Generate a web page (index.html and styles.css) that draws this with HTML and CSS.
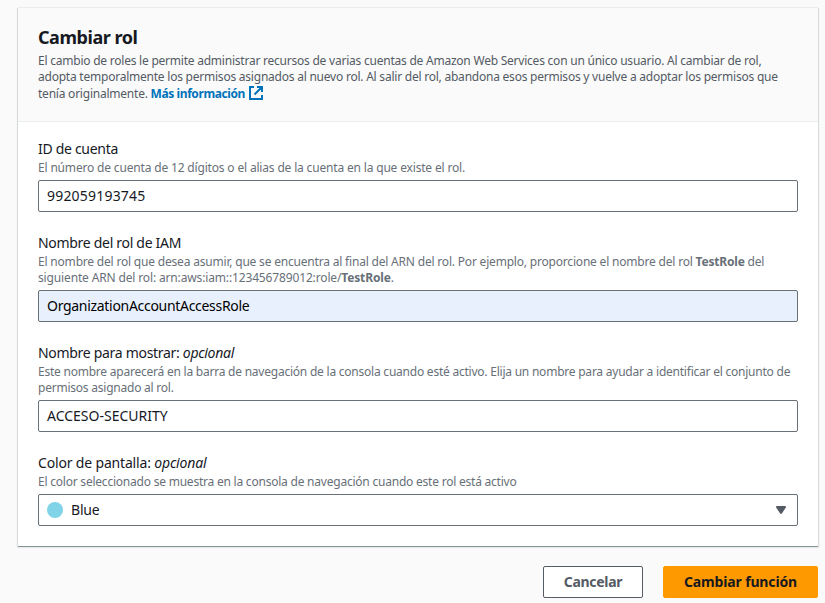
FILE: index.html
```html
<!DOCTYPE html>
<html lang="es">
<head>
<meta charset="utf-8">
<title>Cambiar rol</title>
<link rel="stylesheet" href="styles.css">
</head>
<body>
<form class="page">
  <section class="card">
    <header class="card-header">
      <h1>Cambiar rol</h1>
      <p><span class="line">El cambio de roles le permite administrar recursos de varias cuentas de Amazon Web Services con un único usuario. Al cambiar de rol,</span>
      <span class="line">adopta temporalmente los permisos asignados al nuevo rol. Al salir del rol, abandona esos permisos y vuelve a adoptar los permisos que</span>
      <span class="line">tenía originalmente. <a class="link">Más información<svg class="external" viewBox="0 0 16 16"><path d="M9 2h5v5M6.500 9.500l7-7M14 10v4H2V2h4"/></svg></a></span></p>
    </header>
    <div class="fields">
      <div class="field account">
        <label>ID de cuenta</label>
        <p><span class="line">El número de cuenta de 12 dígitos o el alias de la cuenta en la que existe el rol.</span></p>
        <div class="input digits">992059193745</div>
      </div>
      <div class="field role">
        <label>Nombre del rol de IAM</label>
        <p><span class="line">El nombre del rol que desea asumir, que se encuentra al final del ARN del rol. Por ejemplo, proporcione el nombre del rol <b>TestRole</b> del</span>
        <span class="line arn">siguiente ARN del rol: arn:aws:iam::123456789012:role/<b>TestRole</b>.</span></p>
        <div class="input filled">OrganizationAccountAccessRole</div>
      </div>
      <div class="field">
        <label>Nombre para mostrar: <i>opcional</i></label>
        <p><span class="line">Este nombre aparecerá en la barra de navegación de la consola cuando esté activo. Elija un nombre para ayudar a identificar el conjunto de</span>
        <span class="line">permisos asignado al rol.</span></p>
        <div class="input">ACCESO-SECURITY</div>
      </div>
      <div class="field color">
        <label>Color de pantalla: <i>opcional</i></label>
        <p><span class="line">El color seleccionado se muestra en la consola de navegación cuando este rol está activo</span></p>
        <div class="input select"><span class="swatch"></span><span>Blue</span><svg class="caret" viewBox="0 0 16 16"><path d="M4 5h8l-4 6z"/></svg></div>
      </div>
    </div>
  </section>
  <footer class="actions">
    <button class="button cancel" type="button">Cancelar</button>
    <button class="button primary" type="button">Cambiar función</button>
  </footer>
</form>
</body>
</html>
```
FILE: styles.css
```css
* { box-sizing: border-box; }
body { margin: 0; background: #fafafa; color: #16191f; font: 14px/22px "Noto Sans", sans-serif; overflow: hidden; }
.page { padding: 8px 7px 0 18px; }
.card { height: 538px; background: #fff; box-shadow: 0 1px 0 #879596, 0 -1px 0 #eaeded, 1px 0 0 #d5dbdb, -1px 0 0 #d5dbdb, 0 1px 1px 1px #001c2414; }
.card-header { height: 114px; padding: 15px 20px 0; background: #fafafa; border-bottom: 1px solid #eaeded; }
h1 { margin: 0 0 2px; font-size: 18px; line-height: 28px; font-weight: 700; letter-spacing: -.45px; }
p { margin: 0; font-size: 12px; line-height: 16px; color: #545b64; letter-spacing: -.228px; }
.line { display: block; height: 16px; white-space: nowrap; }
.link { color: #0073bb; font-weight: 700; letter-spacing: -.41px; }
.external { width: 16px; height: 16px; margin-left: 3px; vertical-align: -3px; fill: none; stroke: currentColor; stroke-width: 2; }
.fields { display: flex; flex-direction: column; gap: 20px; padding: 16px 20px; }
label { display: block; letter-spacing: -.3px; }
.color label { letter-spacing: -.17px; }
.field p { color: #687078; }
.account p { letter-spacing: -.17px; }
.role p { letter-spacing: -.192px; }
.role .arn { letter-spacing: -.145px; }
.color p { letter-spacing: -.22px; }
.input { height: 32px; margin-top: 4px; padding: 4px 8px; background: #fff; border: 1px solid #687078; border-radius: 2px; }
.digits { letter-spacing: .2px; }
.filled { background: #e8f0fe; color: #000; letter-spacing: -.3px; }
.select { display: flex; align-items: center; gap: 8px; letter-spacing: -.2px; }
.swatch { width: 16px; height: 16px; border-radius: 50%; background: #81d3e8; }
.caret { width: 16px; height: 16px; margin-left: auto; fill: #545b64; stroke: #545b64; stroke-width: 2; stroke-linejoin: round; }
.actions { display: flex; justify-content: flex-end; gap: 20px; margin-top: 20px; }
.button { height: 32px; border: 1px solid #545b64; border-radius: 2px; background: #fff; color: #545b64; font: 700 14px/22px "Noto Sans", sans-serif; padding: 0; }
.cancel { width: 100px; letter-spacing: -.3px; }
.primary { width: 155px; background: #f90; border-color: #f90; color: #16191f; letter-spacing: -.15px; }
```
